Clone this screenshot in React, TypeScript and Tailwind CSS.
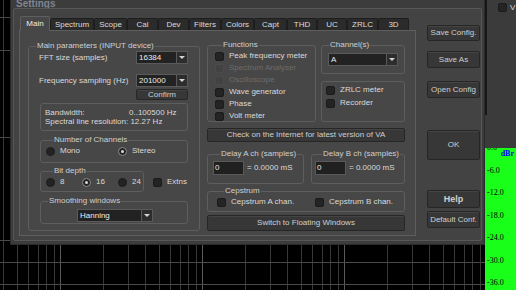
import React from "react";

type Props = { children?: React.ReactNode; className?: string };

const tabs: [string, string][] = [
  ["Main", "w-[30px]"],
  ["Spectrum", "w-[44px]"],
  ["Scope", "w-[33px]"],
  ["Cal", "w-[31px]"],
  ["Dev", "w-[31px]"],
  ["Filters", "w-[32px]"],
  ["Colors", "w-[33px]"],
  ["Capt", "w-[33px]"],
  ["THD", "w-[30px]"],
  ["UC", "w-[30px]"],
  ["ZRLC", "w-[31px]"],
  ["3D", "w-[31px]"],
];

const Group = ({ title, children, className }: Props & { title: string }) => (
  <fieldset className={`border border-[#5e5e5e] rounded-[3px] ${className ?? ""}`}>
    <legend className="ml-[7px] px-[1px] leading-[10px] text-[#cfcfcf]">{title}</legend>
    {children}
  </fieldset>
);

const Check = ({ label, disabled }: { label?: string; disabled?: boolean }) => (
  <div className="flex items-center h-[12px] gap-[5px]">
    <div
      className={`w-[9px] h-[9px] rounded-[2px] border ${
        disabled ? "bg-[#424242] border-[#4b4b4b]" : "bg-[#242424] border-[#1b1b1b]"
      }`}
    />
    {label && <span className={disabled ? "text-[#6c6c6c]" : "text-[#dadada]"}>{label}</span>}
  </div>
);

const Radio = ({ label, checked, className }: { label: string; checked?: boolean; className?: string }) => (
  <div className={`flex items-center h-[12px] gap-[5px] ${className ?? ""}`}>
    <div
      className={`w-[9px] h-[9px] rounded-full border flex items-center justify-center bg-[#232323] ${
        checked ? "border-[#8c8c8c]" : "border-[#1c1c1c]"
      }`}
    >
      {checked && <div className="w-[3px] h-[3px] rounded-full bg-[#d8d8d8]" />}
    </div>
    <span className="text-[#dadada]">{label}</span>
  </div>
);

const Combo = ({ value, className }: { value: string; className: string }) => (
  <div className={`flex bg-[#222222] border border-[#5a5a5a] ${className}`}>
    <div className="flex-1 pl-[2px] flex items-center text-[#ededed]">{value}</div>
    <div className="w-[11px] border-l border-[#5a5a5a] bg-[#2d2d2d] flex items-center justify-center">
      <div className="w-0 h-0 border-x-[3px] border-x-transparent border-t-[3px] border-t-[#d4d4d4]" />
    </div>
  </div>
);

const Btn = ({ children, className }: Props) => (
  <div
    className={`flex items-center justify-center rounded-[2px] bg-[#373737] border border-[#262626] shadow-[inset_0_1px_0_#444] text-[#cfcfcf] ${className ?? ""}`}
  >
    {children}
  </div>
);

const Grid = () => {
  const xs: { x: number; major: boolean }[] = [];
  [-82, 60, 202, 344].forEach((d) => {
    for (let k = 1; k <= 9; k++) {
      const x = d + 142 * Math.log10(k);
      if (x >= 0 && x <= 485) xs.push({ x: Math.round(x) + 0.5, major: k === 1 });
    }
  });
  const ys = [17, 50, 137, 240, 262, 284];
  return (
    <svg width="485" height="290" className="block">
      <rect width="485" height="290" fill="#000" />
      {xs.map((l, i) => (
        <line key={i} x1={l.x} x2={l.x} y1={0} y2={290} stroke={l.major ? "#5a5a5a" : "#383838"} />
      ))}
      {ys.map((y) => (
        <line key={y} x1={0} x2={485} y1={y + 0.5} y2={y + 0.5} stroke="#4a4a4a" />
      ))}
    </svg>
  );
};

const dbLabels = ["0.0", "-6.0", "-12.0", "-18.0", "-24.0", "-30.0", "-36.0"];

export default function App() {
  return (
    <div className="relative w-[516px] h-[290px] overflow-hidden bg-black flex font-['Liberation_Sans',Arial,sans-serif] text-[8px] leading-[10px]">
      <Grid />

      <div className="w-[31px] flex flex-col">
        <div className="h-[148px] bg-[#3b3b3b] flex">
          <div className="w-[2px] h-[115px] bg-[#161616]" />
          <div className="ml-[11px] mt-[3px] flex items-start gap-[3px]">
            <div className="w-[9px] h-[9px] rounded-[2px] bg-[#242424] border border-[#1b1b1b]" />
            <span className="text-[#dadada] leading-[9px]">V</span>
          </div>
        </div>
        <div className="relative flex-1 bg-[#1aff1a] overflow-hidden pl-[2px] font-['Liberation_Serif',serif] text-black">
          <div className="-mt-[5px]">
            {dbLabels.map((l) => (
              <div key={l} className="h-[22.5px] leading-[10px]">
                {l}
              </div>
            ))}
          </div>
          <div className="absolute right-[2px] top-[1px] font-bold text-[#0000ff] leading-[9px]">dBr</div>
        </div>
      </div>

      <div className="absolute left-[10px] top-0 w-[475px] h-[245px] bg-[#3c3c3c] border-x border-b border-[#2a2a2a] flex flex-col">
        <div className="h-[10px] pl-[5px] -mt-[2px] text-[10px] leading-[11px] font-bold text-[#7e8592]">
          Settings
        </div>
        <div className="mx-[2px] mb-[3px] flex-1 border border-[#575757] rounded-[2px] bg-[#434343] flex">
          <div className="pl-[5px] pt-[7px] flex flex-col">
            <div className="flex items-end h-[14px] ml-[1px]">
              {tabs.map(([t, w], i) =>
                i === 0 ? (
                  <div
                    key={t}
                    className={`${w} h-[15px] -mb-px z-10 bg-[#474747] border-x border-t border-[#5e5e5e] rounded-t-[2px] flex items-center justify-center text-[#ececec]`}
                  >
                    {t}
                  </div>
                ) : (
                  <div
                    key={t}
                    className={`${w} h-[12px] bg-[#2b2b2b] border-x border-t border-[#1e1e1e] rounded-t-[2px] flex items-center justify-center text-[#dcdcdc]`}
                  >
                    {t}
                  </div>
                )
              )}
            </div>
            <div className="w-[397px] h-[206px] border border-[#5e5e5e] bg-[#474747] flex pl-[8px] pt-[10px]">
              <Group title="Main parameters (INPUT device)" className="w-[172px] h-[190px] flex flex-col">
                <div className="flex items-center justify-between h-[13px] pl-[10px] pr-[11px]">
                  <span className="text-[#dadada]">FFT size (samples)</span>
                  <Combo value="16384" className="w-[52px] h-[13px]" />
                </div>
                <div className="flex items-center justify-between h-[13px] mt-[10px] pl-[10px] pr-[11px]">
                  <span className="text-[#dadada]">Frequency sampling (Hz)</span>
                  <Combo value="201000" className="w-[52px] h-[13px]" />
                </div>
                <Btn className="self-end mr-[11px] mt-[2px] w-[52px] h-[11px] text-[#8c8c8c]">Confirm</Btn>
                <div className="ml-[11px] mt-[3px] w-[148px] h-[28px] border border-[#5e5e5e] rounded-[3px] pl-[4px] pt-[4px] leading-[9px] text-[#dadada]">
                  <div className="flex">
                    <span className="w-[84px]">Bandwidth:</span>
                    <span>0..100500 Hz</span>
                  </div>
                  <div>Spectral line resolution: 12.27 Hz</div>
                </div>
                <Group title="Number of Channels" className="ml-[11px] mt-[4px] w-[148px] h-[28px] flex pl-[5px]">
                  <div className="flex">
                    <Radio label="Mono" className="w-[72px]" />
                    <Radio label="Stereo" checked />
                  </div>
                </Group>
                <div className="ml-[11px] mt-[3px] flex items-center">
                  <Group title="Bit depth" className="w-[104px] h-[26px] pl-[5px]">
                    <div className="flex">
                      <Radio label="8" className="w-[36px]" />
                      <Radio label="16" checked className="w-[36px]" />
                      <Radio label="24" />
                    </div>
                  </Group>
                  <div className="ml-[9px] mt-[6px]">
                    <Check label="Extns" />
                  </div>
                </div>
                <Group title="Smoothing windows" className="ml-[11px] mt-[4px] w-[148px] h-[28px]">
                  <Combo value="Hanning" className="ml-[36px] mt-[3px] w-[76px] h-[13px]" />
                </Group>
              </Group>

              <div className="ml-[7px] -mt-[1px] w-[198px] flex flex-col">
                <div className="flex">
                  <Group title="Functions" className="w-[109px] h-[82px] pl-[7px]">
                    <Check label="Peak frequency meter" />
                    <Check label="Spectrum Analyser" disabled />
                    <Check label="Oscilloscope" disabled />
                    <Check label="Wave generator" />
                    <Check label="Phase" />
                    <Check label="Volt meter" />
                  </Group>
                  <div className="ml-[5px] w-[84px] flex flex-col">
                    <Group title="Channel(s)" className="h-[34px]">
                      <Combo value="A" className="ml-[6px] mt-[3px] w-[70px] h-[13px]" />
                    </Group>
                    <div className="mt-[7px] h-[41px] border border-[#5e5e5e] rounded-[3px] pl-[4px] pt-[2px]">
                      <Check label="ZRLC meter" />
                      <div className="h-[1px]" />
                      <Check label="Recorder" />
                    </div>
                  </div>
                </div>
                <Btn className="mt-[6px] h-[14px] text-[#c4c4c4]">Check on the Internet for latest version of VA</Btn>
                <div className="flex mt-[7px]">
                  <Group title="Delay A ch (samples)" className="w-[97px] h-[35px] pl-[5px]">
                    <div className="flex items-center mt-[2px] gap-[3px]">
                      <div className="w-[31px] h-[14px] bg-[#202020] border border-[#5a5a5a] pl-[1px] flex items-center text-[#ededed]">
                        0
                      </div>
                      <span className="text-[#dadada]">= 0.0000 mS</span>
                    </div>
                  </Group>
                  <Group title="Delay B ch (samples)" className="ml-[7px] w-[94px] h-[35px] pl-[3px]">
                    <div className="flex items-center mt-[2px] gap-[3px]">
                      <div className="w-[31px] h-[14px] bg-[#202020] border border-[#5a5a5a] pl-[1px] flex items-center text-[#ededed]">
                        0
                      </div>
                      <span className="text-[#dadada]">= 0.0000 mS</span>
                    </div>
                  </Group>
                </div>
                <Group title="Cepstrum" className="mt-[2px] h-[26px] pl-[9px]">
                  <div className="flex">
                    <div className="w-[98px]">
                      <Check label="Cepstrum A chan." />
                    </div>
                    <Check label="Cepstrum B chan." />
                  </div>
                </Group>
                <Btn className="mt-[3px] h-[16px] text-[#c4c4c4]">Switch to Floating Windows</Btn>
              </div>
            </div>
          </div>

          <div className="ml-[11px] pt-[16px] w-[53px] flex flex-col">
            <Btn className="h-[16px]">Save Config.</Btn>
            <Btn className="mt-[10px] h-[17px]">Save As</Btn>
            <Btn className="mt-[13px] h-[17px]">Open Config</Btn>
            <Btn className="mt-[32px] h-[30px] text-[#9c9c9c]">OK</Btn>
            <Btn className="mt-[30px] h-[18px] font-bold text-[9px]">Help</Btn>
            <Btn className="mt-[3px] h-[17px]">Default Conf.</Btn>
          </div>
        </div>
      </div>
    </div>
  );
}
